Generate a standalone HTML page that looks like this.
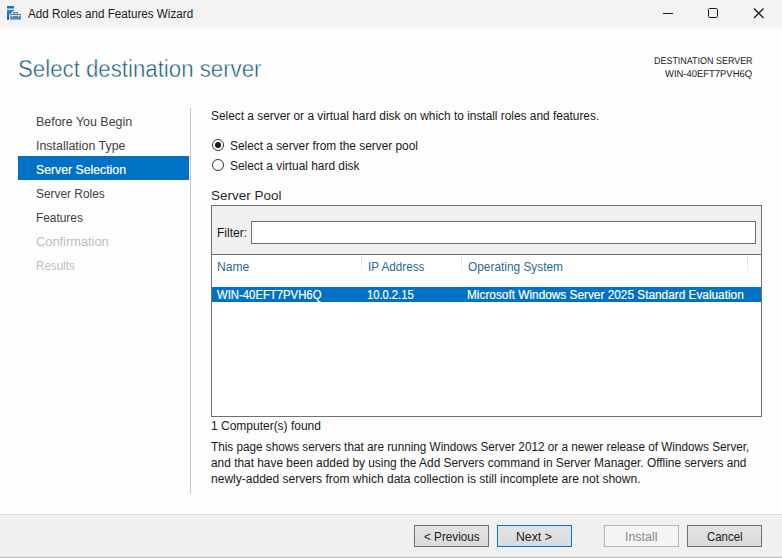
<!DOCTYPE html>
<html>
<head>
<meta charset="utf-8">
<title>Add Roles and Features Wizard</title>
<style>
html,body{margin:0;padding:0;}
body{width:782px;height:558px;overflow:hidden;background:#fdfdfd;font-family:"Liberation Sans",sans-serif;position:relative;color:#000;}
.abs{position:absolute;}
.tx{transform-origin:0 0;position:absolute;white-space:nowrap;line-height:16px;font-family:"Liberation Sans",sans-serif;}
#titlebar{left:0;top:0;width:782px;height:28px;background:linear-gradient(#f3f3f3 0,#f3f3f3 24px,#f6f6f6 25px,#f6f6f6 27px,#f9f9f9 28px);}
#navsel{left:18px;top:156px;width:171px;height:24px;background:#0072c6;}
#vsep{left:190px;top:108px;width:1px;height:386px;background:#c6c6c6;}
.radio{width:10px;height:10px;border:1px solid #333;border-radius:50%;background:#fff;}
.radio i{position:absolute;left:2px;top:2px;width:6px;height:6px;border-radius:50%;background:#1a1a1a;}
#poolbox{left:211px;top:205px;width:549px;height:210px;border:1px solid #707070;background:#fff;}
#filterbg{left:212px;top:206px;width:549px;height:48px;background:#f0f0f0;border-bottom:1px solid #707070;}
#filterin{left:251px;top:221px;width:503px;height:21px;border:1px solid #6e6e6e;background:#fff;}
.csep{top:256px;width:1px;height:22px;background:linear-gradient(#dcdcdc,#fff);}
#rowsel{left:212px;top:287px;width:549px;height:15px;background:#0072c6;}
#footer{left:0;top:514px;width:782px;height:44px;background:#f0f0f0;border-top:1px solid #dcdcdc;box-sizing:border-box;}
.btn{top:525px;width:73px;height:20px;border:1px solid #707070;background:linear-gradient(#e3e3e3,#dadada);}
.btn.def{border-color:#0078d7;}
.btn.dis{background:#f4f4f4;border-color:#b4b8bb;}
#bl1{left:0;top:556px;width:782px;height:1px;background:#e8e8e8;}
#bl2{left:0;top:557px;width:782px;height:1px;background:#bdbdbd;}
</style>
</head>
<body>
<div class="abs" id="titlebar"></div>
<svg class="abs" style="left:0;top:0" width="28" height="24" viewBox="0 0 28 24">
  <defs><linearGradient id="g1" x1="0" y1="0" x2="0" y2="1"><stop offset="0" stop-color="#2b8cdb"/><stop offset="1" stop-color="#15609c"/></linearGradient></defs>
  <g fill="#e9f6fd" stroke="#e9f6fd" stroke-width="1.6" stroke-linejoin="round">
    <rect x="7" y="6" width="7" height="2.5"/>
    <path d="M7 9.8H14V10.6L10.2 14H9.2V19.7H7Z"/>
    <rect x="10.3" y="14" width="10.7" height="5.6"/>
    <path d="M13.5 14V13a.6.6 0 0 1 .6-.6h3a.6.6 0 0 1 .6.6V14" fill="none" stroke-width="2.4"/>
  </g>
  <rect x="7" y="6" width="7" height="2.5" fill="#1a74bc"/>
  <path d="M7 9.8H14V10.6L10.2 14H9.2V19.7H7Z" fill="url(#g1)"/>
  <rect x="10.3" y="14" width="10.7" height="5.6" fill="#5f829e"/>
  <path d="M13.6 14.2V13.2a.6.6 0 0 1 .6-.6h2.8a.6.6 0 0 1 .6.6V14.2" fill="none" stroke="#5f829e" stroke-width="1.1"/>
  <path d="M10.9 15H20.3V15.8H19.5L18.7 17.2L17.9 15.8H13.3L12.5 17.2L11.7 15.8H10.9Z" fill="#f4fbff"/>
</svg>
<svg class="abs" style="left:655px;top:0" width="127" height="28" viewBox="0 0 127 28">
  <path d="M8 13.5h10" stroke="#1a1a1a" stroke-width="1" fill="none"/>
  <rect x="53.5" y="8.5" width="9" height="9" rx="1.2" fill="none" stroke="#1a1a1a" stroke-width="1"/>
  <path d="M99 8.5l9.5 9.5M108.5 8.5L99 18" stroke="#1a1a1a" stroke-width="1.25" fill="none"/>
</svg>

<div class="abs" id="navsel"></div>
<div class="abs" id="vsep"></div>
<div class="abs radio" style="left:212px;top:139px"><i></i></div>
<div class="abs radio" style="left:212px;top:159px"></div>
<div class="abs" id="poolbox"></div>
<div class="abs" id="filterbg"></div>
<div class="abs" id="filterin"></div>
<div class="abs csep" style="left:361px"></div>
<div class="abs csep" style="left:461px"></div>
<div class="abs csep" style="left:747px"></div>
<div class="abs" id="rowsel"></div>
<div class="abs" id="footer"></div>
<div class="abs btn" style="left:414px"></div>
<div class="abs btn def" style="left:497px"></div>
<div class="abs btn dis" style="left:604px"></div>
<div class="abs btn" style="left:687px"></div>
<div class="abs" id="bl1"></div>
<div class="abs" id="bl2"></div>
<div class="tx" id="t1" style="left:28.00px;top:5.83px;font-size:12px;transform:scale(0.9708,1);transform-origin:0 12.0px;color:#1a1a1a;-webkit-text-stroke:0.0px #f3f3f3;">Add Roles and Features Wizard</div>
<div class="tx" id="t2" style="left:18.00px;top:60.93px;font-size:23.5px;transform:scale(0.9463,1);transform-origin:0 16.0px;color:#0e5875;-webkit-text-stroke:0.5px #fdfdfd;">Select destination server</div>
<div class="tx" id="t3" style="left:654.00px;top:53.66px;font-size:9.8px;transform:scale(0.9129,1);transform-origin:0 11.5px;color:#222222;text-rendering:geometricPrecision;-webkit-text-stroke:0.0px #fdfdfd;">DESTINATION SERVER</div>
<div class="tx" id="t4" style="left:665.00px;top:66.96px;font-size:9.8px;transform:scale(0.9634,1);transform-origin:0 11.5px;color:#222222;text-rendering:geometricPrecision;-webkit-text-stroke:0.0px #fdfdfd;">WIN-40EFT7PVH6Q</div>
<div class="tx" id="n1" style="left:36.00px;top:113.77px;font-size:12.5px;transform:scale(0.9953,1);transform-origin:0 12.0px;color:#424242;-webkit-text-stroke:0.0px #fdfdfd;">Before You Begin</div>
<div class="tx" id="n2" style="left:36.00px;top:137.77px;font-size:12.5px;transform:scale(0.9934,1);transform-origin:0 12.0px;color:#424242;-webkit-text-stroke:0.0px #fdfdfd;">Installation Type</div>
<div class="tx" id="n3" style="left:36.00px;top:161.67px;font-size:12.5px;transform:scale(0.9810,1);transform-origin:0 12.0px;color:#ffffff;-webkit-text-stroke:0.2px #ffffff;">Server Selection</div>
<div class="tx" id="n4" style="left:36.00px;top:185.67px;font-size:12.5px;transform:scale(0.9516,1);transform-origin:0 12.0px;color:#424242;-webkit-text-stroke:0.0px #fdfdfd;">Server Roles</div>
<div class="tx" id="n5" style="left:36.00px;top:209.67px;font-size:12.5px;transform:scale(0.9499,1);transform-origin:0 12.0px;color:#424242;-webkit-text-stroke:0.0px #fdfdfd;">Features</div>
<div class="tx" id="n6" style="left:36.00px;top:233.77px;font-size:12.5px;transform:scale(1.0261,1);transform-origin:0 12.0px;color:#bdbdbd;-webkit-text-stroke:0.0px #fdfdfd;">Confirmation</div>
<div class="tx" id="n7" style="left:36.00px;top:257.77px;font-size:12.5px;transform:scale(0.9285,1);transform-origin:0 12.0px;color:#bdbdbd;-webkit-text-stroke:0.0px #fdfdfd;">Results</div>
<div class="tx" id="m1" style="left:211.00px;top:108.03px;font-size:12px;transform:scale(0.9898,1);transform-origin:0 12.0px;color:#1a1a1a;-webkit-text-stroke:0.0px #fdfdfd;">Select a server or a virtual hard disk on which to install roles and features.</div>
<div class="tx" id="r1" style="left:230.00px;top:137.73px;font-size:12px;transform:scale(0.9886,1);transform-origin:0 12.0px;color:#1a1a1a;-webkit-text-stroke:0.0px #fdfdfd;">Select a server from the server pool</div>
<div class="tx" id="r2" style="left:230.00px;top:157.63px;font-size:12px;transform:scale(0.9904,1);transform-origin:0 12.0px;color:#1a1a1a;-webkit-text-stroke:0.0px #fdfdfd;">Select a virtual hard disk</div>
<div class="tx" id="sp" style="left:211.00px;top:188.30px;font-size:13px;transform:scale(1.0366,1);transform-origin:0 12.5px;color:#2a2a2a;-webkit-text-stroke:0.0px #fdfdfd;">Server Pool</div>
<div class="tx" id="fl" style="left:217.00px;top:225.13px;font-size:12px;transform:scale(1.0025,1);transform-origin:0 12.0px;color:#1a1a1a;-webkit-text-stroke:0.0px #f0f0f0;">Filter:</div>
<div class="tx" id="h1" style="left:217.00px;top:259.03px;font-size:12px;transform:scale(1.0057,1);transform-origin:0 12.0px;color:#2a699c;-webkit-text-stroke:0.0px #fdfdfd;">Name</div>
<div class="tx" id="h2" style="left:368.00px;top:259.03px;font-size:12px;transform:scale(0.9754,1);transform-origin:0 12.0px;color:#2a699c;-webkit-text-stroke:0.0px #fdfdfd;">IP Address</div>
<div class="tx" id="h3" style="left:468.00px;top:259.03px;font-size:12px;transform:scale(0.9887,1);transform-origin:0 12.0px;color:#2a699c;-webkit-text-stroke:0.0px #fdfdfd;">Operating System</div>
<div class="tx" id="c1" style="left:217.00px;top:287.13px;font-size:12px;transform:scale(0.9437,1);transform-origin:0 12.0px;color:#ffffff;-webkit-text-stroke:0.2px #ffffff;">WIN-40EFT7PVH6Q</div>
<div class="tx" id="c2" style="left:367.00px;top:287.13px;font-size:12px;transform:scale(0.9317,1);transform-origin:0 12.0px;color:#ffffff;-webkit-text-stroke:0.2px #ffffff;">10.0.2.15</div>
<div class="tx" id="c3" style="left:467.00px;top:287.13px;font-size:12px;transform:scale(0.9856,1);transform-origin:0 12.0px;color:#ffffff;-webkit-text-stroke:0.2px #ffffff;">Microsoft Windows Server 2025 Standard Evaluation</div>
<div class="tx" id="f1" style="left:211.00px;top:418.13px;font-size:12px;transform:scale(0.9989,1);transform-origin:0 12.0px;color:#1a1a1a;-webkit-text-stroke:0.0px #fdfdfd;">1 Computer(s) found</div>
<div class="tx" id="p1" style="left:211.00px;top:438.93px;font-size:12px;transform:scale(0.9784,1);transform-origin:0 12.0px;color:#1a1a1a;-webkit-text-stroke:0.0px #fdfdfd;">This page shows servers that are running Windows Server 2012 or a newer release of Windows Server,</div>
<div class="tx" id="p2" style="left:211.00px;top:455.23px;font-size:12px;transform:scale(0.9902,1);transform-origin:0 12.0px;color:#1a1a1a;-webkit-text-stroke:0.0px #fdfdfd;">and that have been added by using the Add Servers command in Server Manager. Offline servers and</div>
<div class="tx" id="p3" style="left:211.00px;top:471.03px;font-size:12px;transform:scale(1.0031,1);transform-origin:0 12.0px;color:#1a1a1a;-webkit-text-stroke:0.0px #fdfdfd;">newly-added servers from which data collection is still incomplete are not shown.</div>
<div class="tx" id="b1" style="left:424.00px;top:528.83px;font-size:12px;transform:scale(0.9746,1);transform-origin:0 12.0px;color:#1a1a1a;-webkit-text-stroke:0.0px #e1e1e1;">&lt; Previous</div>
<div class="tx" id="b2" style="left:516.00px;top:528.83px;font-size:12px;transform:scale(1.0237,1);transform-origin:0 12.0px;color:#1a1a1a;-webkit-text-stroke:0.0px #e1e1e1;">Next &gt;</div>
<div class="tx" id="b3" style="left:625.00px;top:528.83px;font-size:12px;transform:scale(1.0343,1);transform-origin:0 12.0px;color:#8a8a8a;-webkit-text-stroke:0.0px #f4f4f4;">Install</div>
<div class="tx" id="b4" style="left:707.00px;top:528.83px;font-size:12px;transform:scale(0.9527,1);transform-origin:0 12.0px;color:#1a1a1a;-webkit-text-stroke:0.0px #e1e1e1;">Cancel</div>
</body>
</html>
